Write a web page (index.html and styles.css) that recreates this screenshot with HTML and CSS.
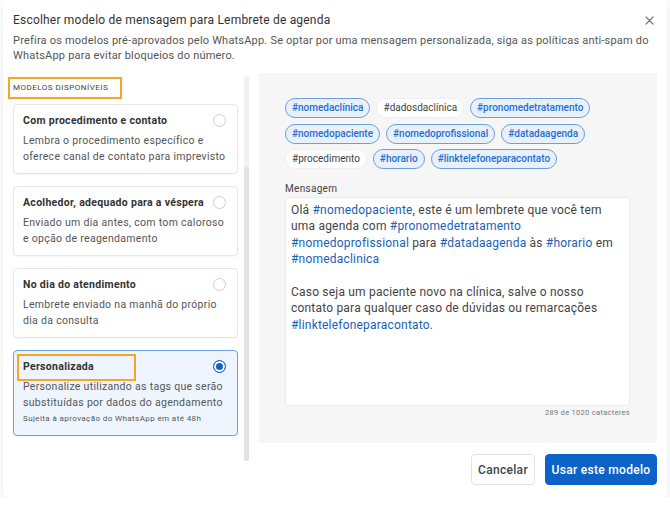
FILE: index.html
```html
<!DOCTYPE html>
<html lang="pt-BR">
<head>
    <meta charset="UTF-8">
    <meta name="viewport" content="width=device-width, initial-scale=1.0">
    <title>Escolher modelo de mensagem</title>
    <link rel="stylesheet" href="styles.css">
</head>
<body>
    <div class="dialog">
        <div class="dialog-header">
            <div class="title-row">
                <h1>Escolher modelo de mensagem para Lembrete de agenda</h1>
                <button class="close-btn" aria-label="Fechar">
                    <svg width="9" height="9" viewBox="0 0 9 9"><path d="M1 1L8 8M8 1L1 8" stroke="#777" stroke-width="1.2" stroke-linecap="round"/></svg>
                </button>
            </div>
            <p class="subtitle">Prefira os modelos pré-aprovados pelo WhatsApp. Se optar por uma mensagem personalizada, siga as políticas anti-spam do WhatsApp para evitar bloqueios do número.</p>
        </div>

        <div class="dialog-body">
            <div class="models">
                <div class="models-list">
                    <div class="section-label">MODELOS DISPONÍVEIS</div>

                    <div class="model-card">
                        <div class="card-head">
                            <h3>Com procedimento e contato</h3>
                            <span class="radio"></span>
                        </div>
                        <p>Lembra o procedimento específico e oferece canal de contato para imprevisto</p>
                    </div>
                    <div class="model-card">
                        <div class="card-head">
                            <h3>Acolhedor, adequado para a véspera</h3>
                            <span class="radio"></span>
                        </div>
                        <p>Enviado um dia antes, com tom caloroso e opção de reagendamento</p>
                    </div>
                    <div class="model-card">
                        <div class="card-head">
                            <h3>No dia do atendimento</h3>
                            <span class="radio"></span>
                        </div>
                        <p>Lembrete enviado na manhã do próprio dia da consulta</p>
                    </div>
                    <div class="model-card selected">
                        <div class="card-head">
                            <h3><span class="mark">Personalizada</span></h3>
                            <span class="radio checked"></span>
                        </div>
                        <p>Personalize utilizando as tags que serão substituídas por dados do agendamento</p>
                        <small>Sujeita à aprovação do WhatsApp em até 48h</small>
                    </div>
                </div>
                <div class="scroll-track"><div class="scroll-thumb"></div></div>
            </div>

            <div class="main-col">
                <div class="editor">
                    <div class="tags">
                        <span class="tag used">#nomedaclínica</span>
                        <span class="tag">#dadosdaclínica</span>
                        <span class="tag used">#pronomedetratamento</span>
                        <span class="tag used">#nomedopaciente</span>
                        <span class="tag used">#nomedoprofissional</span>
                        <span class="tag used">#datadaagenda</span>
                        <span class="tag">#procedimento</span>
                        <span class="tag used">#horario</span>
                        <span class="tag used">#linktelefoneparacontato</span>
                    </div>

                    <label class="field-label">Mensagem</label>
                    <div class="message">
                        <p>Olá <b>#nomedopaciente</b>, este é um lembrete que você tem uma agenda com <b>#pronomedetratamento</b> <b>#nomedoprofissional</b> para <b>#datadaagenda</b> às <b>#horario</b> em <b>#nomedaclinica</b></p>
                        <p>Caso seja um paciente novo na clínica, salve o nosso contato para qualquer caso de dúvidas ou remarcações <b>#linktelefoneparacontato</b>.</p>
                    </div>
                    <div class="counter">289 de 1020 catacteres</div>
                </div>

                <div class="dialog-footer">
                    <button class="btn btn-outline">Cancelar</button>
                    <button class="btn btn-primary">Usar este modelo</button>
                </div>
            </div>
        </div>
    </div>
</body>
</html>
```

FILE: styles.css
```css
* { margin: 0; padding: 0; box-sizing: border-box; }
body {
    font-family: Roboto, "Liberation Sans", sans-serif;
    background: #fff;
    color: #333;
    letter-spacing: 0.2px;
}
.dialog {
    width: 664px;
    height: 497px;
    margin-left: 3px;
    background: #fff;
    border-radius: 4px;
    box-shadow: 0 2px 8px rgba(0,0,0,0.1);
}

/* header */
.dialog-header { padding: 12px 10px 0 10px; }
.title-row {
    display: flex;
    align-items: center;
    justify-content: space-between;
}
h1 {
    font-size: 12px;
    line-height: 16px;
    font-weight: 400;
    color: #333;
}
.close-btn {
    background: none;
    border: none;
    width: 16px;
    height: 16px;
    display: flex;
    align-items: center;
    justify-content: center;
}
.subtitle {
    margin-top: 5px;
    font-size: 11px;
    line-height: 15px;
    color: #555;
}

/* body */
.dialog-body {
    display: flex;
    margin-top: 10px;
    padding-left: 5px;
}
.models {
    display: flex;
    width: 241px;
    flex-shrink: 0;
}
.models-list { width: 230px; }
.section-label {
    margin-top: 4px;
    width: 114px;
    height: 22px;
    border: 2px solid #f5a623;
    padding-left: 3px;
    font-size: 8px;
    line-height: 18px;
    letter-spacing: 0.5px;
    color: #444;
}
.model-card {
    margin: 5px 0 12px 5px;
    border: 1px solid #e6e6e6;
    border-radius: 4px;
    padding: 8px 10px 8px 9px;
    background: #fff;
    box-shadow: 0 1px 2px rgba(0,0,0,0.04);
}
.model-card + .model-card { margin-top: 0; }
.model-card.selected {
    padding-bottom: 9px;
    background: #eef5fe;
    border-color: #6aa3e6;
}
.card-head {
    display: flex;
    align-items: center;
    justify-content: space-between;
    height: 14px;
}
.card-head h3 {
    font-size: 10.5px;
    font-weight: 700;
    color: #333;
    letter-spacing: 0.3px;
}
.mark { position: relative; }
/* orange highlight frame drawn over the title */
.mark::after {
    content: '';
    position: absolute;
    left: -6px;
    top: -6px;
    width: 115px;
    height: 23px;
    border: 2px solid #f5a623;
}
.radio {
    width: 13px;
    height: 13px;
    border-radius: 50%;
    border: 1px solid #cfcfcf;
    background: #fff;
    margin-right: 1px;
}
.radio.checked {
    border: 1.5px solid #0b63c8;
    box-shadow: inset 0 0 0 2px #fff;
    background: #0b63c8;
}
.model-card p {
    margin-top: 6px;
    font-size: 10.5px;
    line-height: 16px;
    color: #555;
    letter-spacing: 0.3px;
}
.model-card small {
    display: block;
    font-size: 8px;
    line-height: 15px;
    color: #555;
    letter-spacing: 0.4px;
}
.scroll-track {
    width: 5px;
    margin-left: 6px;
    margin-top: 3px;
    height: 385px;
    background: #f1f1f1;
    border-radius: 3px;
    display: flex;
    flex-direction: column;
    justify-content: flex-end;
}
.scroll-thumb {
    height: 294px;
    background: #e2e2e2;
    border-radius: 3px;
}

/* right column: editor panel and actions */
.main-col {
    width: 398px;
    margin-left: 10px;
}
.editor {
    height: 370px;
    background: #f6f6f6;
    padding: 25px 27px 0 26px;
}
.tags {
    display: flex;
    flex-wrap: wrap;
    gap: 5.5px 6px;
}
.tag {
    height: 20px;
    padding: 0 6px;
    border-radius: 10px;
    font-size: 10px;
    line-height: 18px;
    letter-spacing: 0;
    color: #444;
    background: #fff;
    border: 1px solid #f0f0f0;
}
.tag.used {
    color: #1f6fd1;
    font-weight: 500;
    background: #e8f0fb;
    border-color: #6b9fe0;
}
.field-label {
    display: block;
    margin-top: 14px;
    font-size: 10px;
    line-height: 12px;
    color: #444;
    letter-spacing: 0.3px;
}
.message {
    margin-top: 2px;
    height: 209px;
    background: #fff;
    border: 1px solid #ebebeb;
    border-radius: 3px;
    padding: 4px 5px;
    font-size: 12px;
    line-height: 16.4px;
    color: #444;
}
.message p + p { margin-top: 16.4px; }
.message b {
    font-weight: 400;
    color: #1a5fb4;
}
.counter {
    margin-top: 2px;
    text-align: right;
    font-size: 7.5px;
    line-height: 10px;
    color: #777;
    letter-spacing: 0.3px;
}

.dialog-footer {
    display: flex;
    justify-content: flex-end;
    gap: 10px;
    margin-top: 11px;
}
.btn {
    height: 31px;
    border-radius: 4px;
    font-family: inherit;
    font-size: 12px;
    letter-spacing: 0.3px;
    font-weight: 500;
    white-space: nowrap;
}
.btn-outline {
    background: #fff;
    border: 1px solid #e2e2e2;
    color: #444;
    width: 64px;
}
.btn-primary {
    background: #0b63c8;
    border: 1px solid #0b63c8;
    color: #fff;
    width: 112px;
}
```
